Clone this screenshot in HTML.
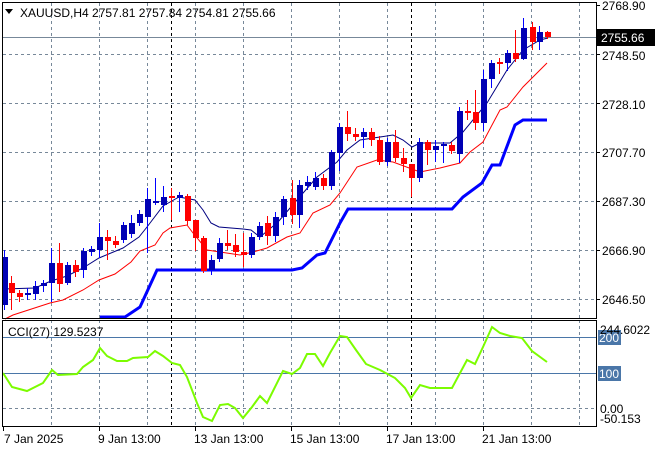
<!DOCTYPE html>
<html><head><meta charset="utf-8"><style>
html,body{margin:0;padding:0;background:#fff;width:660px;height:450px;overflow:hidden}
svg{display:block}
text{font-family:"Liberation Sans",sans-serif;font-size:12px;fill:#000}
</style></head><body>
<svg width="660" height="450" viewBox="0 0 660 450" xmlns="http://www.w3.org/2000/svg">
<g stroke="#778899" stroke-width="1" stroke-dasharray="3,3" fill="none">
<path d="M51.5 3V318M99.5 3V318M147.5 3V318M195.5 3V318M243.5 3V318M291.5 3V318M339.5 3V318M387.5 3V318M435.5 3V318M483.5 3V318M531.5 3V318M579.5 3V318"/>
<path d="M51.5 320V426M99.5 320V426M147.5 320V426M195.5 320V426M243.5 320V426M291.5 320V426M339.5 320V426M387.5 320V426M435.5 320V426M483.5 320V426M531.5 320V426M579.5 320V426"/>
<path d="M3 54.5H596M3 103.5H596M3 152.5H596M3 201.5H596M3 250.5H596M3 299.5H596M3 408.5H596"/>
</g>
<g stroke="#000" stroke-dasharray="3,3"><path d="M171.5 3V318M171.5 320V426M411.5 3V318M411.5 320V426"/></g>
<path d="M3 37.5H596" stroke="#778899"/>
<path d="M3 337.5H596M3 373.5H596" stroke="#4a76a8"/>
<!-- MAs -->
<polyline fill="none" stroke="#ff0000" stroke-width="1" points="5,319 13,315 50,303 63,300 83,290 99,280 115,274 131,262 140,251 155,245 163,233 170,228 187,225 193,233 207,250 220,252 240,255 253,252 267,248 287,237 300,233 313,213 330,205 340,193 357,167 377,160 393,162 420,172 440,168 460,163 470,152 483,142 500,110 507,107 523,87 547,63"/>
<polyline fill="none" stroke="#000080" stroke-width="1" points="3,289 35,288 51,281 67,276 83,268 99,258 123,248 139,237 147,227 163,206 179,197 195,200 203,210 211,223 219,227 243,229 251,230 260,237 278,222 297,200 317,177 337,162 347,150 360,140 380,137 393,135 403,140 412,147 420,143 450,143 463,132 487,103 507,70 523,50 540,40 548,38"/>
<polyline fill="none" stroke="#0000ff" stroke-width="3" points="100,317 125,317 140,307 157,270 292,270 302,268 317,255 325,253 340,223 348,209 452,209 463,197 482,183 492,165 500,165 515,125 523,120 547,120"/>
<!-- candles -->
<g id="c"></g>
<!-- CCI -->
<polyline fill="none" stroke="#7cfc00" stroke-width="2" points="3,373 12,387 27,391 43,383 52,370 58,375 77,374 83,367 93,360 100,348 107,356 117,361 127,361 133,358 148,357 155,351 163,356 172,363 180,365 187,377 197,403 203,417 212,421 220,405 228,404 235,408 243,418 252,407 260,396 267,403 283,371 292,374 300,368 307,354 315,354 323,366 330,353 340,336 347,337 356,350 366,364 380,370 395,378 405,388 411,398 420,385 430,388 452,388 467,360 475,364 483,347 492,327 500,333 510,336 522,338 532,351 547,362"/>
<text x="8" y="336">CCI(27) 129.5237</text>
<!-- borders -->
<rect x="2.5" y="2.5" width="594" height="316" fill="none" stroke="#000"/>
<rect x="2.5" y="320.5" width="594" height="106" fill="none" stroke="#000"/>
<path d="M5 9l4 5 4-5z" fill="#000"/>
<text x="20" y="17">XAUUSD,H4  2757.81 2757.84 2754.81 2755.66</text>
<!-- right axis -->
<g stroke="#000"><path d="M596 5.5h4M596 54.5h4M596 103.5h4M596 152.5h4M596 201.5h4M596 250.5h4M596 299.5h4"/></g>
<text x="602" y="10">2768.90</text>
<text x="602" y="60">2748.50</text>
<text x="602" y="109">2728.10</text>
<text x="602" y="157">2707.70</text>
<text x="602" y="206">2687.30</text>
<text x="602" y="255">2666.90</text>
<text x="602" y="304">2646.50</text>
<rect x="597" y="29" width="58" height="17" fill="#000"/>
<text x="601" y="42" style="fill:#fff">2755.66</text>
<rect x="598" y="330" width="23" height="15" fill="#4a76a8"/>
<rect x="598" y="366" width="23" height="15" fill="#4a76a8"/>
<text x="599" y="342" style="fill:#fff">200</text>
<text x="599" y="378" style="fill:#fff">100</text>
<text x="600" y="334">244.6022</text>
<text x="600" y="413">0.00</text>
<text x="600" y="423">-50.153</text>
<!-- time axis -->
<g stroke="#000"><path d="M3.5 426v5M99.5 426v5M195.5 426v5M291.5 426v5M387.5 426v5M483.5 426v5"/></g>
<text x="4" y="443">7 Jan 2025</text>
<text x="98" y="443">9 Jan 13:00</text>
<text x="194" y="443">13 Jan 13:00</text>
<text x="290" y="443">15 Jan 13:00</text>
<text x="386" y="443">17 Jan 13:00</text>
<text x="482" y="443">21 Jan 13:00</text>
</svg>
<script>
var d=[[4,'b',257,305,250,310],[11,'r',283,293,276,310],[19,'r',293,297,290,302],[27,'b',293,295,288,300],[35,'b',286,294,281,300],[43,'b',283,286,280,292],[51,'b',263,283,248,302],[59,'r',263,284,243,292],[67,'b',265,283,262,285],[75,'r',265,272,260,277],[83,'b',251,270,248,278],[91,'b',249,252,246,256],[99,'b',237,250,223,258],[107,'r',237,241,230,260],[115,'r',241,245,236,248],[123,'b',225,240,222,243],[131,'b',223,234,215,238],[139,'b',214,223,210,226],[147,'b',199,217,188,253],[155,'b',201,203,178,205],[163,'b',197,205,186,212],[171,'r',196,198,188,220],[179,'b',195,198,192,212],[187,'r',196,221,194,225],[195,'r',220,238,220,251],[203,'r',238,271,236,273],[211,'b',260,270,255,275],[219,'b',243,259,238,262],[227,'r',243,246,230,250],[235,'r',245,252,234,257],[243,'r',252,255,233,267],[251,'b',237,255,233,258],[259,'b',226,237,222,240],[267,'r',223,236,216,245],[275,'b',217,236,212,242],[283,'b',199,217,196,225],[292,'r',198,215,180,224],[299,'b',185,215,180,228],[307,'b',182,186,176,190],[315,'b',178,187,172,190],[323,'r',178,186,174,190],[331,'b',152,186,150,190],[339,'b',127,153,123,171],[347,'r',127,134,111,141],[355,'r',134,137,128,141],[363,'b',132,137,128,148],[371,'r',132,140,128,146],[379,'r',140,162,136,165],[387,'b',142,162,138,166],[395,'r',142,158,130,162],[403,'r',158,164,148,172],[411,'r',164,178,164,197],[419,'b',142,178,138,182],[427,'r',142,150,140,165],[435,'b',146,150,140,162],[443,'b',144,146,142,163],[451,'r',145,151,142,154],[459,'b',111,154,107,163],[467,'r',111,113,100,120],[475,'r',112,123,90,130],[483,'b',79,123,70,131],[491,'b',63,79,60,88],[499,'r',62,64,58,74],[507,'b',53,63,50,71],[515,'r',53,59,30,62],[523,'b',28,59,18,60],[532,'r',27,42,22,50],[539,'b',32,42,26,50],[547,'r',32,37,31,39]];
var s='',ns='http://www.w3.org/2000/svg';
d.forEach(function(c){var col=c[1]=='b'?'#0000b4':'#ff0000';
s+='<line x1="'+(c[0]+0.5)+'" x2="'+(c[0]+0.5)+'" y1="'+c[4]+'" y2="'+c[5]+'" stroke="'+(c[1]=='b'?'#0000ff':'#ff0000')+'"/>';
s+='<rect x="'+(c[0]-2)+'" y="'+c[2]+'" width="6" height="'+Math.max(2,c[3]-c[2])+'" fill="'+col+'"/>';});
document.getElementById('c').innerHTML=s;
</script>
</body></html>
